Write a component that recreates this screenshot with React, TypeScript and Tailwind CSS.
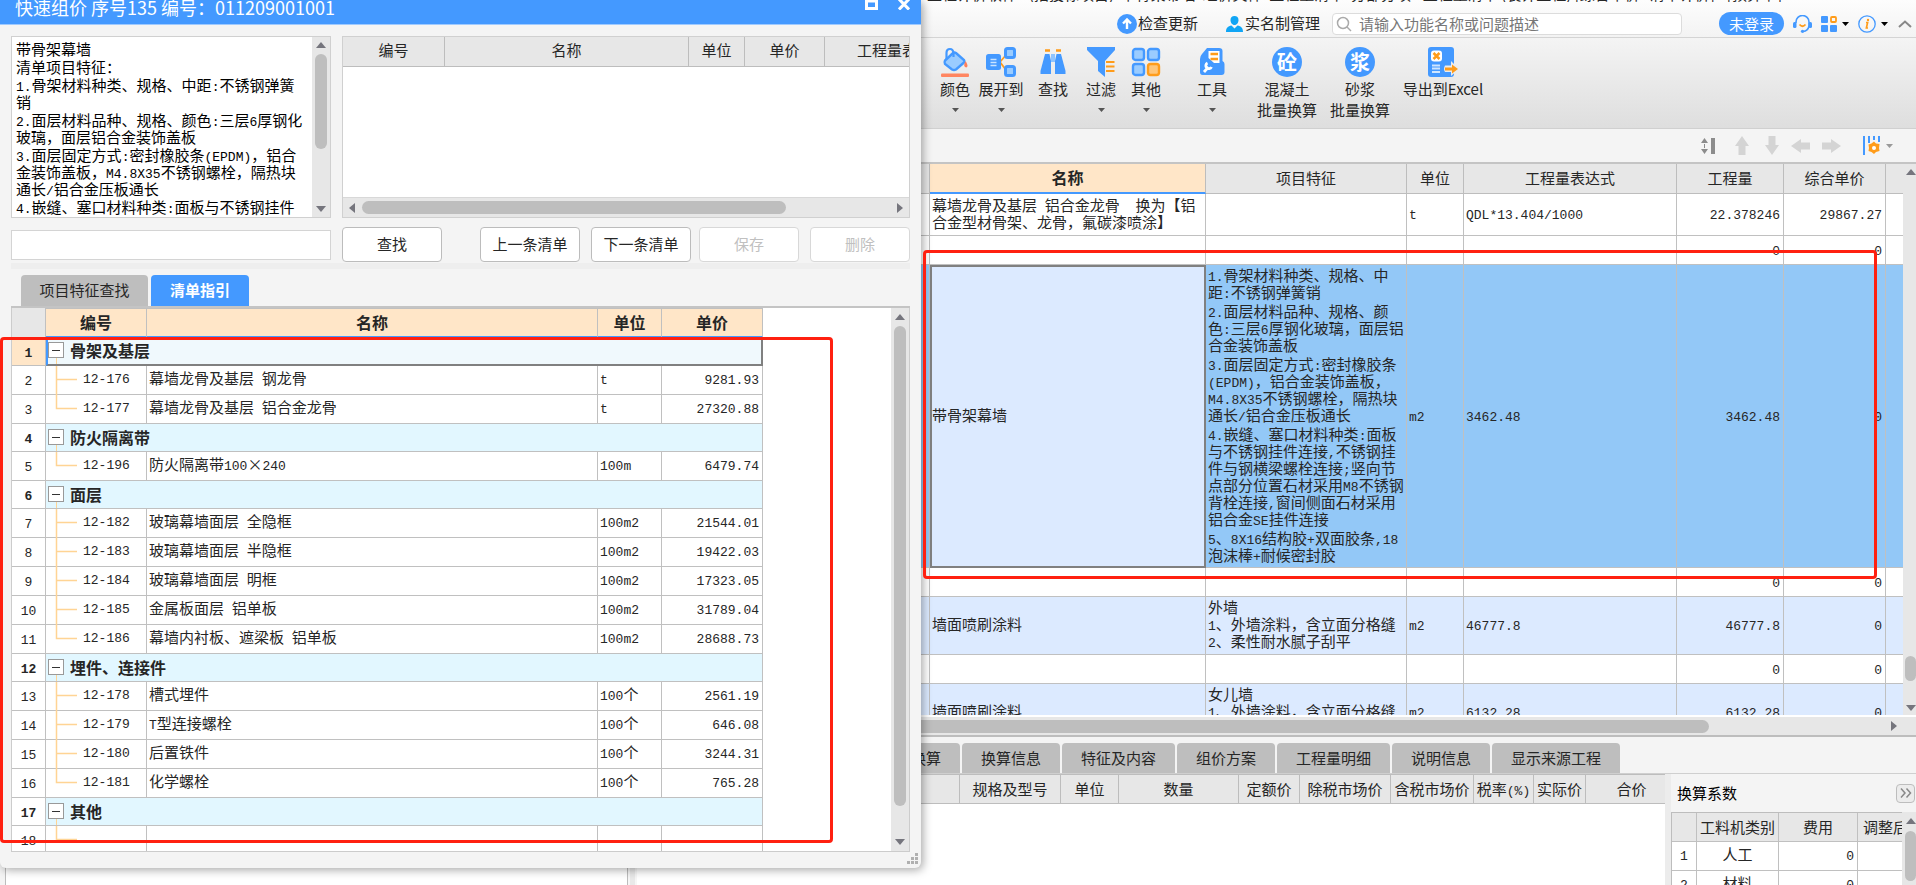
import type { ReactNode } from 'react';
import { clsx } from 'clsx';

type GuideRow = {
  no: number;
  group?: boolean;
  last?: boolean;
  code?: string;
  name?: string;
  unit?: string;
  price?: string;
};

const guideRows: GuideRow[] = [
  { no: 1, group: true, name: '骨架及基层' },
  { no: 2, code: '12-176', name: '幕墙龙骨及基层 钢龙骨', unit: 't', price: '9281.93' },
  { no: 3, code: '12-177', name: '幕墙龙骨及基层 铝合金龙骨', unit: 't', price: '27320.88', last: true },
  { no: 4, group: true, name: '防火隔离带' },
  { no: 5, code: '12-196', name: '防火隔离带100×240', unit: '100m', price: '6479.74', last: true },
  { no: 6, group: true, name: '面层' },
  { no: 7, code: '12-182', name: '玻璃幕墙面层 全隐框', unit: '100m2', price: '21544.01' },
  { no: 8, code: '12-183', name: '玻璃幕墙面层 半隐框', unit: '100m2', price: '19422.03' },
  { no: 9, code: '12-184', name: '玻璃幕墙面层 明框', unit: '100m2', price: '17323.05' },
  { no: 10, code: '12-185', name: '金属板面层 铝单板', unit: '100m2', price: '31789.04' },
  { no: 11, code: '12-186', name: '幕墙内衬板、遮梁板 铝单板', unit: '100m2', price: '28688.73', last: true },
  { no: 12, group: true, name: '埋件、连接件' },
  { no: 13, code: '12-178', name: '槽式埋件', unit: '100个', price: '2561.19' },
  { no: 14, code: '12-179', name: 'T型连接螺栓', unit: '100个', price: '646.08' },
  { no: 15, code: '12-180', name: '后置铁件', unit: '100个', price: '3244.31' },
  { no: 16, code: '12-181', name: '化学螺栓', unit: '100个', price: '765.28', last: true },
  { no: 17, group: true, name: '其他' },
  { no: 18, code: '', name: '', unit: '', price: '', last: true },
];

const descParas = [
  '带骨架幕墙',
  '清单项目特征：',
  '1.骨架材料种类、规格、中距:不锈钢弹簧\n销',
  '2.面层材料品种、规格、颜色:三层6厚钢化\n玻璃，面层铝合金装饰盖板',
  '3.面层固定方式:密封橡胶条(EPDM)，铝合\n金装饰盖板，M4.8X35不锈钢螺栓，隔热块\n通长/铝合金压板通长',
  '4.嵌缝、塞口材料种类:面板与不锈钢挂件',
];

const featureParas = [
  '1.骨架材料种类、规格、中\n距:不锈钢弹簧销',
  '2.面层材料品种、规格、颜\n色:三层6厚钢化玻璃，面层铝\n合金装饰盖板',
  '3.面层固定方式:密封橡胶条\n(EPDM)，铝合金装饰盖板，\nM4.8X35不锈钢螺栓，隔热块\n通长/铝合金压板通长',
  '4.嵌缝、塞口材料种类:面板\n与不锈钢挂件连接,不锈钢挂\n件与钢横梁螺栓连接;竖向节\n点部分位置石材采用M8不锈钢\n背栓连接,窗间侧面石材采用\n铝合金SE挂件连接',
  '5、8X16结构胶+双面胶条,18\n泡沫棒+耐候密封胶',
];

const billRows = [
  { name: '幕墙龙骨及基层 铝合金龙骨  换为【铝\n合金型材骨架、龙骨，氟碳漆喷涂】', unit: 't', expr: 'QDL*13.404/1000', qty: '22.378246', price: '29867.27', h: 'h-[42px]' },
  { qty: '0', price: '0', h: 'h-[29px]' },
  { name: '带骨架幕墙', feature: featureParas, unit: 'm2', expr: '3462.48', qty: '3462.48', price: '0', h: 'h-[303px]', selected: true },
  { qty: '0', price: '0', h: 'h-[29px]' },
  { name: '墙面喷刷涂料', feature: ['外墙', '1、外墙涂料，含立面分格缝', '2、柔性耐水腻子刮平'], unit: 'm2', expr: '46777.8', qty: '46777.8', price: '0', h: 'h-[58px]', blue: true },
  { qty: '0', price: '0', h: 'h-[29px]' },
  { name: '墙面喷刷涂料', feature: ['女儿墙', '1、外墙涂料，含立面分格缝', '2、柔性耐水腻子刮平'], unit: 'm2', expr: '6132.28', qty: '6132.28', price: '0', h: 'h-[58px]', blue: true },
];

// ASCII runs are set half-width so they line up with the full-width characters
function Mixed({ text }: { text: string }) {
  return (
    <>
      {text.split(/([\x20-\x7e]+)/).map((part, i) =>
        i % 2 ? (
          <span key={i} className="font-['Liberation_Mono',monospace] text-[13px] leading-[0px]">{part}</span>
        ) : (
          part
        ),
      )}
    </>
  );
}

function Arrow({ dir, className = 'text-[#75757d]' }: { dir: 'up' | 'down' | 'left' | 'right'; className?: string }) {
  const d = { up: 'M0 8L5 2L10 8Z', down: 'M0 2H10L5 8Z', left: 'M8 0V10L2 5Z', right: 'M2 0V10L8 5Z' }[dir];
  return (
    <svg width="10" height="10" viewBox="0 0 10 10" className={clsx('shrink-0', className)}>
      <path d={d} fill="currentColor" />
    </svg>
  );
}

function Caret({ className = 'text-[#555]' }: { className?: string }) {
  return (
    <svg width="7" height="4" viewBox="0 0 7 4" className={clsx('shrink-0', className)}>
      <path d="M0 0H7L3.5 4Z" fill="currentColor" />
    </svg>
  );
}

function TopBar() {
  return (
    <header className="flex h-[38px] shrink-0 flex-col border-b border-[#d4d4d4] bg-gradient-to-b from-[#fdfdfd] to-[#f3f3f3] pl-[922px]">
      <div className="flex h-[2px] shrink-0 items-end justify-end overflow-hidden whitespace-pre pr-[134px] text-[15px] leading-[17px]">
        工程计价软件 - (招投标项目)  带骨架幕墙  组价文件  工程量清单  分部分项 - 工程量清单 (装饰工程) [综合单价   清单计价] - [预算书]
      </div>
      <div className="flex flex-1 items-center justify-end pr-1 pt-2 whitespace-nowrap">
        <a href="#update" className="flex items-center gap-px">
          <svg width="20" height="20" viewBox="0 0 20 20">
            <circle cx="10" cy="10" r="10" fill="#4499ff" />
            <path d="M10 15V6M6 9.5L10 5.5L14 9.5" stroke="#fff" strokeWidth="2.4" fill="none" />
          </svg>
          检查更新
        </a>
        <a href="#realname" className="ml-7 flex items-center gap-[2px]">
          <svg width="17" height="16" viewBox="0 0 17 16" fill="#10a5f5">
            <path d="M4.5 4C4.500 1.500 6 0 8.500 0S12.500 1.500 12.500 4S11 9 8.500 9S4.500 6.500 4.500 4Z" />
            <path d="M0 16C0 12 2 10 5.500 9.500L8.500 12.500L11.500 9.500C15 10 17 12 17 16Z" />
          </svg>
          实名制管理
        </a>
        <label className="ml-3 flex h-[22px] w-[350px] items-center gap-[7px] rounded border border-[#dcdcdc] bg-white pl-[3px]">
          <svg width="16" height="16" viewBox="0 0 16 16" fill="none" stroke="#aaa" strokeWidth="1.5">
            <circle cx="7" cy="7" r="5.500" />
            <path d="M11 11L15 15" />
          </svg>
          <input aria-label="搜索" placeholder="请输入功能名称或问题描述" className="min-w-0 flex-1 bg-transparent leading-5 outline-none placeholder:text-[#777]" />
        </label>
        <button className="ml-[37px] h-[23px] w-[65px] rounded-full bg-[#4499ff] leading-[22px] text-white">未登录</button>
        <button aria-label="客服" className="ml-[9px]">
          <svg width="19" height="18" viewBox="0 0 19 18" fill="none">
            <path d="M3 8V7A6.500 6.500 0 0 1 16 7V11Q15 16 10 16.500" stroke="#4499ff" strokeWidth="1.600" />
            <rect x="0" y="7" width="3.500" height="6" rx="1.500" fill="#4499ff" />
            <rect x="15.500" y="7" width="3.500" height="6" rx="1.500" fill="#4499ff" />
            <path d="M6.500 9.500Q9.500 13 12.500 9.500" stroke="#ff9c1a" strokeWidth="1.800" />
            <circle cx="9.500" cy="16.300" r="1.600" fill="#4499ff" />
          </svg>
        </button>
        <button aria-label="应用" className="ml-[9px] flex items-center gap-[5px]">
          <svg width="16" height="16" viewBox="0 0 16 16">
            <g fill="#4499ff">
              <rect width="7" height="7" rx="1" />
              <rect y="9" width="7" height="7" rx="1" />
              <rect x="9" y="9" width="7" height="7" rx="1" />
            </g>
            <rect x="10" y="1" width="5" height="5" rx="1" fill="none" stroke="#ff9c1a" strokeWidth="1.800" />
          </svg>
          <Caret className="text-black" />
        </button>
        <button aria-label="关于" className="ml-[9px] flex items-center gap-[5px]">
          <svg width="18" height="18" viewBox="0 0 18 18" fill="none">
            <circle cx="9" cy="9" r="8.200" stroke="#4499ff" strokeWidth="1.300" />
            <path d="M8 7.500H9.600L8.400 13H10" stroke="#ff9c1a" strokeWidth="1.700" />
            <circle cx="10" cy="5" r="1.200" fill="#ff9c1a" />
          </svg>
          <Caret className="text-black" />
        </button>
        <button aria-label="收起" className="ml-[10px]">
          <svg width="14" height="8" viewBox="0 0 14 8" fill="none" stroke="#888" strokeWidth="2">
            <path d="M1 7L7 1.500L13 7" />
          </svg>
        </button>
      </div>
    </header>
  );
}

const icons: Record<string, ReactNode> = {
  paint: (
    <svg width="30" height="30" viewBox="0 0 30 30">
      <path d="M13 6Q14.500 5 16 6L24 13Q25 14.500 24 15.500L16 22.500Q14 23.500 12 22.500L5 17Q4 15.500 5 13.500Z" fill="#9accff" stroke="#4499ff" strokeWidth="2.400" />
      <path d="M6.500 12V6Q6.500 2 10 2Q13 2 13.500 6V10" fill="none" stroke="#4499ff" strokeWidth="2.200" />
      <path d="M25.500 14Q29 19 26.500 20.500Q22.500 20 25.500 14Z" fill="#ff7f5a" />
      <rect x="1" y="26.500" width="28" height="3.500" rx="1" fill="#ff8560" />
    </svg>
  ),
  expand: (
    <svg width="30" height="30" viewBox="0 0 30 30">
      <path d="M14 15L20 8M14 15L20 23" stroke="#ff9c1a" strokeWidth="1.800" />
      <rect x="0" y="7" width="15" height="16" rx="2.500" fill="#4499ff" />
      <path d="M4.500 12.500H10.500M4.500 15.500H10.500M4.500 18.500H10.500" stroke="#c9e4ff" strokeWidth="1.500" />
      <rect x="19.500" y="1.500" width="9" height="9" rx="2" fill="#9accff" stroke="#4499ff" strokeWidth="3" />
      <rect x="19.500" y="19.500" width="9" height="9" rx="2" fill="#9accff" stroke="#4499ff" strokeWidth="3" />
    </svg>
  ),
  find: (
    <svg width="30" height="30" viewBox="0 0 30 30">
      <path d="M7 3.500H12M18 3.500H23" stroke="#ff9c1a" strokeWidth="2.500" />
      <path d="M7 7H11.500L13 14V27H2.500V24Z" fill="#4499ff" />
      <path d="M18.500 7H23L27.500 24V27H17V14Z" fill="#4499ff" />
      <path d="M13 7H17V15H13Z" fill="#8fc4ff" />
    </svg>
  ),
  filter: (
    <svg width="30" height="30" viewBox="0 0 30 30">
      <path d="M1 0H29V3L19 14V30L12 24V14L1 3Z" fill="#4499ff" />
      <path d="M20 15H28.500M20 19.500H28.500M20 24H28.500" stroke="#ff9c1a" strokeWidth="2.200" />
    </svg>
  ),
  other: (
    <svg width="30" height="30" viewBox="0 0 30 30" fill="#9accff" stroke="#4499ff" strokeWidth="2.400">
      <rect x="2" y="2" width="11" height="11" rx="2.500" />
      <rect x="17" y="2" width="11" height="11" rx="2.500" />
      <rect x="2" y="17" width="11" height="11" rx="2.500" />
      <rect x="17" y="17" width="11" height="11" rx="2.500" fill="#ffc67a" stroke="#ff9c1a" />
    </svg>
  ),
  tool: (
    <svg width="30" height="30" viewBox="0 0 30 30">
      <path d="M10 1H22Q25.500 1 25.500 4V14Q27.500 15 27.500 17V25Q27.500 28 24.500 28H5.500Q3 28 3 25V12Q3 9 5 7Z" fill="#4499ff" />
      <path d="M11.500 4H22.500V16H17L11.500 11Z" fill="#fff" />
      <path d="M13.500 7H21M13.500 12H21" stroke="#ff9c1a" strokeWidth="2.400" />
      <path d="M7 25L11.500 20M10.500 16A3 3 0 1 0 14.500 20" stroke="#fff" strokeWidth="2.800" fill="none" />
    </svg>
  ),
  concrete: <span className="flex size-[30px] items-center justify-center rounded-full bg-[#4499ff] text-xl font-bold leading-none text-white">砼</span>,
  mortar: <span className="flex size-[30px] items-center justify-center rounded-full bg-[#4499ff] text-xl font-bold leading-none text-white">浆</span>,
  excel: (
    <svg width="32" height="30" viewBox="0 0 32 30">
      <rect x="1" y="0" width="26" height="30" rx="3" fill="#4499ff" />
      <rect x="4" y="3.500" width="11" height="11" rx="3" fill="#fff" />
      <path d="M6.500 6L12.500 12M12.500 6L6.500 12" stroke="#ff9c1a" strokeWidth="2.500" />
      <path d="M5 18.500H13M5 21.500H13M5 25H13" stroke="#cfe6ff" strokeWidth="1.800" />
      <path d="M18 18.500H24V14L32 22L24 29V25H18Q16 22 18 18.500Z" fill="#ececec" />
      <path d="M18 20.500H25V17.500L31 22L25 26.500V23.500H18Z" fill="#ff9c1a" />
    </svg>
  ),
};

const ribbonItems = [
  { icon: 'paint', label: '颜色', menu: true, w: 'w-9' },
  { icon: 'expand', label: '展开到', menu: true, w: 'w-14' },
  { icon: 'find', label: '查找', w: 'w-12' },
  { icon: 'filter', label: '过滤', menu: true, w: 'w-12' },
  { icon: 'other', label: '其他', menu: true, w: 'w-[42px]' },
  { icon: 'tool', label: '工具', menu: true, w: 'w-[90px]' },
  { icon: 'concrete', label: '混凝土', sub: '批量换算', w: 'w-[60px]' },
  { icon: 'mortar', label: '砂浆', sub: '批量换算', w: 'w-[86px]' },
  { icon: 'excel', label: '导出到Excel', w: 'w-20' },
];

function Ribbon() {
  return (
    <nav className="flex h-[91px] shrink-0 border-b border-[#d0d0d0] bg-gradient-to-b from-[#f4f4f4] to-[#dedede] pl-[937px] pt-[9px]">
      {ribbonItems.map((item) => (
        <button key={item.label} className={clsx('flex h-20 flex-col items-center whitespace-nowrap', item.w)}>
          {icons[item.icon]}
          <span className="mt-px leading-[22px]">{item.label}</span>
          {item.sub && <span className="leading-5">{item.sub}</span>}
          {item.menu && <Caret className="mt-2 text-[#555]" />}
        </button>
      ))}
    </nav>
  );
}

function GridToolbar() {
  return (
    <div className="flex h-[33px] shrink-0 items-center justify-end bg-[#f4f4f4] pr-[23px]">
      <button aria-label="行高">
        <svg width="14" height="16" viewBox="0 0 14 16" fill="#8c8c8c">
          <path d="M0 5L3.500 0L7 5ZM0 11L3.500 16L7 11ZM3 6H4V10H3Z" />
          <rect x="10" width="4" height="16" />
        </svg>
      </button>
      <button aria-label="上移" className="ml-5">
        <svg width="14" height="19" viewBox="0 0 14 19" fill="#d4d4d4"><path d="M7 0L14 10H10.500V19H3.500V10H0Z" /></svg>
      </button>
      <button aria-label="下移" className="ml-4">
        <svg width="14" height="19" viewBox="0 0 14 19" fill="#d4d4d4"><path d="M7 19L14 9H10.500V0H3.500V9H0Z" /></svg>
      </button>
      <button aria-label="左移" className="ml-3">
        <svg width="19" height="14" viewBox="0 0 19 14" fill="#d4d4d4"><path d="M0 7L10 0V3.500H19V10.500H10V14Z" /></svg>
      </button>
      <button aria-label="右移" className="ml-3">
        <svg width="19" height="14" viewBox="0 0 19 14" fill="#d4d4d4"><path d="M19 7L9 0V3.500H0V10.500H9V14Z" /></svg>
      </button>
      <button aria-label="列设置" className="ml-[22px] flex items-center gap-[6px]">
        <svg width="17" height="19" viewBox="0 0 17 19">
          <path d="M1 0V19M6 0V7M11 0V4M16 0V6" stroke="#4499ff" strokeWidth="2" />
          <path d="M11 5.500L13 7.500L16.500 8L16 12L16.500 15L13 16L11 18L8.500 16L5.500 15L6 12L5.500 8.500L8.500 7.500Z" fill="#ff9c1a" />
          <circle cx="11" cy="12" r="2" fill="#fff" />
        </svg>
        <Caret className="text-[#999]" />
      </button>
    </div>
  );
}

const mainHead = 'border-r border-b border-[#bdbdbd] bg-[#e7e7e7] pt-0 pb-[2px] font-normal';
const line = 'border-r border-b border-[#c0c0c0] pt-0';
const cell = 'border-r border-b border-[#c0c0c0] pt-0 pb-1';

function BillGrid() {
  return (
    <div className="flex min-h-0 flex-1 border-t-2 border-[#c4c4c4]">
      <div className="min-w-0 flex-1 overflow-hidden">
        <table className="w-full table-fixed border-separate border-spacing-0 whitespace-pre text-left leading-[17px]">
          <colgroup>
            <col className="w-[930px]" />
            <col className="w-[276px]" />
            <col className="w-[201px]" />
            <col className="w-[57px]" />
            <col />
            <col className="w-[107px]" />
            <col className="w-[102px]" />
            <col className="w-[17px]" />
          </colgroup>
          <thead>
            <tr className="h-[30px] text-center">
              <th className={mainHead} />
              <th className="border-r border-b-2 border-r-[#bdbdbd] border-b-[#4499ff] bg-[#ffe6c8] pt-0 pb-[2px] text-base font-bold leading-[17px]">名称</th>
              <th className={mainHead}>项目特征</th>
              <th className={mainHead}>单位</th>
              <th className={mainHead}>工程量表达式</th>
              <th className={mainHead}>工程量</th>
              <th className={mainHead}>综合单价</th>
              <th className="border-b border-[#bdbdbd] bg-[#e7e7e7]" />
            </tr>
          </thead>
          <tbody>
            {billRows.map((row, i) => (
              <tr key={i} className={clsx(row.h, row.selected ? 'bg-[#93c8f7]' : row.blue ? 'bg-[#dceaff]' : 'bg-white')}>
                <td className={cell} />
                <td className={row.selected ? 'border-2 border-[#808080] bg-[#dceaff] px-0 pt-0 pb-1' : clsx(cell, 'pl-[2px]')}>
                  <Mixed text={row.name ?? ''} />
                </td>
                <td className={clsx(cell, 'pl-[2px]')}>
                  <div className={row.selected ? 'space-y-[2px]' : ''}>
                    {row.feature?.map((p) => <p key={p}><Mixed text={p} /></p>)}
                  </div>
                </td>
                <td className={clsx(cell, 'pl-[2px]')}><Mixed text={row.unit ?? ''} /></td>
                <td className={clsx(cell, 'pl-[2px]')}><Mixed text={row.expr ?? ''} /></td>
                <td className={clsx(cell, 'pr-[3px] text-right')}><Mixed text={row.qty} /></td>
                <td className={clsx(cell, 'pr-[3px] text-right')}><Mixed text={row.price} /></td>
                <td className="border-b border-[#c0c0c0]" />
              </tr>
            ))}
          </tbody>
        </table>
      </div>
      <div className="flex w-[13px] shrink-0 flex-col items-end overflow-hidden bg-[#e7e7e7] pb-[2px] pt-[3px]">
        <Arrow dir="up" />
        <div className="flex-1" />
        <div className="mb-[22px] h-[25px] w-[11px] rounded-full bg-[#bebebe]" />
        <Arrow dir="down" />
      </div>
    </div>
  );
}

const detailTabs = ['标准换算', '换算信息', '特征及内容', '组价方案', '工程量明细', '说明信息', '显示来源工程'];

function DetailPanel() {
  return (
    <section className="flex h-[150px] shrink-0 flex-col border-t-2 border-[#bdbdbd] bg-[#f4f4f4]">
      <div className="flex h-[37px] items-end gap-[2px] border-b border-[#cfcfcf] pl-[862px]">
        {detailTabs.map((t) => (
          <button key={t} className="h-[30px] rounded-t-sm bg-[#bebebe] px-[19px] whitespace-nowrap">{t}</button>
        ))}
      </div>
      <div className="flex min-h-0 flex-1">
        <div className="w-[5px] shrink-0" />
        <div className="w-[623px] shrink-0 border-x border-[#bdbdbd] bg-white" />
        <div className="w-[9px] shrink-0 border-x-2 border-[#f6f6f6] bg-[#e9e9e9]" />
        <div className="min-w-0 flex-1 bg-white">
          <table className="w-full table-fixed border-separate border-spacing-0 whitespace-nowrap">
            <colgroup>
              <col className="w-[323px]" />
              <col className="w-[101px]" />
              <col className="w-[58px]" />
              <col className="w-[120px]" />
              <col className="w-[61px]" />
              <col className="w-[91px]" />
              <col className="w-[83px]" />
              <col className="w-[60px]" />
              <col className="w-[52px]" />
              <col />
            </colgroup>
            <thead>
              <tr className="h-[30px]">
                {['', '规格及型号', '单位', '数量', '定额价', '除税市场价', '含税市场价', '税率(%)', '实际价', '合价'].map((h) => (
                  <th key={h} className="border-b border-t border-r border-[#bdbdbd] bg-[#e7e7e7] px-0 text-[15px] font-normal leading-5 last:border-r-0 last:pl-3">
                    <Mixed text={h} />
                  </th>
                ))}
              </tr>
            </thead>
          </table>
        </div>
        <aside className="flex w-[251px] shrink-0 flex-col overflow-hidden border-l-[6px] border-[#ececec]">
          <div className="flex h-[38px] shrink-0 items-center justify-between pl-[6px] pr-px">
            <h2 className="text-black">换算系数</h2>
            <button aria-label="展开" className="flex size-[19px] items-center justify-center rounded border border-[#bdbdbd] bg-[#ececec]">
              <svg width="12" height="10" viewBox="0 0 12 10" fill="none" stroke="#888" strokeWidth="1.500"><path d="M1 0.500L5 5L1 9.500M6.500 0.500L10.500 5L6.500 9.500" /></svg>
            </button>
          </div>
          <div className="flex min-h-0 flex-1">
            <div className="min-w-0 flex-1 overflow-hidden bg-white">
              <table className="w-[290px] table-fixed border-separate border-spacing-0 whitespace-nowrap border-l border-t border-[#bdbdbd] leading-5">
                <colgroup>
                  <col className="w-[25px]" />
                  <col className="w-[82px]" />
                  <col className="w-[79px]" />
                  <col />
                </colgroup>
                <thead>
                  <tr className="h-[29px] bg-[#e7e7e7]">
                    <th className={line} />
                    <th className={clsx(line, 'font-normal')}>工料机类别</th>
                    <th className={clsx(line, 'font-normal')}>费用</th>
                    <th className={clsx(line, 'pl-[5px] text-left font-normal')}>调整后系数</th>
                  </tr>
                </thead>
                <tbody>
                  {['人工', '材料'].map((name, i) => (
                    <tr key={name} className="h-[29px]">
                      <td className={clsx(cell, 'text-center')}><Mixed text={String(i + 1)} /></td>
                      <td className={clsx(cell, 'text-center')}>{name}</td>
                      <td className={clsx(cell, 'pr-[3px] text-right')}><Mixed text="0" /></td>
                      <td className={cell} />
                    </tr>
                  ))}
                </tbody>
              </table>
            </div>
            <div className="flex w-[14px] shrink-0 flex-col items-end gap-[5px] bg-[#e7e7e7] pt-1">
              <Arrow dir="up" />
              <div className="h-[50px] w-[11px] shrink-0 rounded-full bg-[#bebebe]" />
            </div>
          </div>
        </aside>
      </div>
    </section>
  );
}

// vertical connector plus the branch that leads to the item code
function TreeLine({ last }: { last?: boolean }) {
  return (
    <svg width="32" height="29" viewBox="0 0 32 29" className="shrink-0" stroke="#ffd494" strokeWidth="1.500" fill="none">
      <path d={last ? 'M10.500 0V13.500H31' : 'M10.500 0V29M10.500 13.500H31'} />
    </svg>
  );
}

function GuideTable() {
  return (
    <table className="w-[751px] table-fixed border-separate border-spacing-0 whitespace-pre text-left leading-[18px]">
      <colgroup>
        <col className="w-[34px]" />
        <col className="w-[101px]" />
        <col className="w-[451px]" />
        <col className="w-[64px]" />
        <col className="w-[101px]" />
      </colgroup>
      <thead>
        <tr className="h-[30px] text-center text-base leading-[18px]">
          <th className="border-r border-b border-[#c0c0c0] bg-[#e7e7e7]" />
          {['编号', '名称', '单位', '单价'].map((h) => (
            <th key={h} className="border-r border-b-2 border-t border-[#c0c0c0] border-b-[#4499ff] bg-[#ffe6c8] pt-0 pb-[2px] font-bold">{h}</th>
          ))}
        </tr>
      </thead>
      <tbody>
        {guideRows.map((row) =>
          row.group ? (
            <tr key={row.no} className="h-7 font-bold">
              <td className={clsx(line, 'pb-[2px] text-center', row.no === 1 && 'bg-[#ffe6c8]')}><Mixed text={String(row.no)} /></td>
              <td
                colSpan={4}
                className={row.no === 1 ? 'border-b-2 border-l-2 border-r-2 border-[#808080] border-l-[#4499ff] bg-[#f0f9fd] p-0' : 'border-r border-b border-[#c0c0c0] bg-[#e2f7ff] p-0'}
              >
                <div className={clsx('flex items-center gap-[6px] text-base leading-[18px]', row.no === 1 ? 'h-[26px]' : 'h-[27px] pl-[2px]')}>
                  <span className="flex flex-col items-center self-end">
                    <button aria-label="折叠" className="flex size-4 items-center justify-center border border-[#999] bg-white">
                      <span className="h-px w-2 bg-[#333]" />
                    </button>
                    <span className="h-[6px] w-px bg-[#ffd494]" />
                  </span>
                  <span className="pb-[2px]">{row.name}</span>
                </div>
              </td>
            </tr>
          ) : (
            <tr key={row.no} className="h-[29px]">
              <td className={clsx(line, 'pb-[2px] text-center')}><Mixed text={String(row.no)} /></td>
              <td className="border-r border-b border-[#c0c0c0] p-0">
                <div className="flex h-7 items-center gap-[5px]">
                  <TreeLine last={row.last} />
                  <Mixed text={row.code ?? ''} />
                </div>
              </td>
              <td className={clsx(cell, 'pl-[2px]')}><Mixed text={row.name ?? ''} /></td>
              <td className={clsx(cell, 'pl-[2px]')}><Mixed text={row.unit ?? ''} /></td>
              <td className={clsx(cell, 'pr-[3px] text-right')}><Mixed text={row.price ?? ''} /></td>
            </tr>
          ),
        )}
      </tbody>
    </table>
  );
}

function DialogButton({ children, disabled, className }: { children: ReactNode; disabled?: boolean; className?: string }) {
  return (
    <button
      disabled={disabled}
      className={clsx('h-[35px] w-[100px] shrink-0 rounded border bg-white', disabled ? 'border-[#d8d8d8] text-[#c0c0c0]' : 'border-[#bcbcbc]', className)}
    >
      {children}
    </button>
  );
}

function QuickPriceDialog() {
  return (
    <div role="dialog" aria-label="快速组价" className="absolute bottom-[17px] left-0 top-0 flex w-[921px] flex-col rounded-b-md bg-[#f4f4f4] shadow-[2px_2px_10px_rgba(0,0,0,0.35)]">
      <div className="flex h-[25px] shrink-0 items-start justify-between border-b border-[#9fcaff] bg-[#4499ff] pl-[15px] pr-[11px] text-white">
        <h1 className="text-lg leading-[14px]">快速组价 序号135 编号：011209001001</h1>
        <div className="flex gap-5">
          <button aria-label="还原">
            <svg width="13" height="10" viewBox="0 0 13 10" className="block"><path d="M1.500 0V8.500H11.500V0M0 1H13" stroke="#fff" strokeWidth="3" fill="none" /></svg>
          </button>
          <button aria-label="关闭">
            <svg width="12" height="10" viewBox="0 0 12 10" className="block"><path d="M1 -1L11 9.500M11 -1L1 9.500" stroke="#fff" strokeWidth="3" /></svg>
          </button>
        </div>
      </div>

      <div className="flex min-h-0 flex-1 flex-col px-[11px] pb-4 pt-[11px]">
        <div className="flex h-[182px] shrink-0 gap-[11px]">
          <div className="flex w-[320px] shrink-0 border border-[#d0d0d0] bg-white">
            <div className="min-w-0 flex-1 space-y-px overflow-hidden whitespace-pre pl-1 pt-[3px] leading-[17px] text-black">
              {descParas.map((p) => <p key={p}><Mixed text={p} /></p>)}
            </div>
            <div className="flex w-[18px] flex-col items-center bg-[#e7e7e7] py-[3px]">
              <Arrow dir="up" />
              <div className="mt-1 h-[95px] w-3 rounded-full bg-[#bebebe]" />
              <div className="flex-1" />
              <Arrow dir="down" />
            </div>
          </div>
          <div className="flex min-w-0 flex-1 flex-col overflow-hidden border border-[#d0d0d0] bg-white">
            <table className="w-[637px] table-fixed border-separate border-spacing-0">
              <colgroup>
                <col className="w-[102px]" />
                <col className="w-[244px]" />
                <col className="w-[56px]" />
                <col className="w-[80px]" />
                <col className="w-[155px]" />
              </colgroup>
              <thead>
                <tr className="h-[30px]">
                  {['编号', '名称', '单位', '单价', '工程量表达式'].map((h) => (
                    <th key={h} className={mainHead}>{h}</th>
                  ))}
                </tr>
              </thead>
            </table>
            <div className="flex-1" />
            <div className="flex h-5 items-center border-t border-[#d8d8d8] bg-[#e7e7e7] px-1">
              <Arrow dir="left" />
              <div className="ml-[5px] h-[13px] w-[424px] rounded-full bg-[#bebebe]" />
              <div className="flex-1" />
              <Arrow dir="right" />
            </div>
          </div>
        </div>

        <div className="mt-[9px] flex h-[35px] shrink-0 items-center">
          <input aria-label="查找内容" className="h-[30px] w-[320px] border border-[#d4d4d4] bg-white px-2 outline-none" />
          <DialogButton className="ml-[11px]">查找</DialogButton>
          <div className="flex-1" />
          <DialogButton>上一条清单</DialogButton>
          <DialogButton className="ml-[11px]">下一条清单</DialogButton>
          <DialogButton disabled className="ml-2">保存</DialogButton>
          <DialogButton disabled className="ml-[11px]">删除</DialogButton>
        </div>
        <div className="mt-px h-[6px] shrink-0 bg-[#eeeeee]" />

        <div className="mt-[6px] flex h-[33px] shrink-0 gap-[3px] border-b-2 border-[#c4c4c4] pl-[10px]">
          <button className="w-[127px] rounded-t-sm bg-[#bebebe]">项目特征查找</button>
          <button className="w-[98px] rounded-t-sm bg-[#4499ff] font-bold text-white">清单指引</button>
        </div>
        <div className="flex min-h-0 flex-1 border-x border-b border-[#cccccc] bg-white">
          <div className="min-w-0 flex-1 overflow-hidden">
            <GuideTable />
          </div>
          <div className="flex w-[18px] shrink-0 flex-col items-center bg-[#e7e7e7] py-1">
            <Arrow dir="up" />
            <div className="mt-1 h-[480px] w-3 rounded-full bg-[#bebebe]" />
            <div className="flex-1" />
            <Arrow dir="down" />
          </div>
        </div>
      </div>
      <svg width="11" height="11" viewBox="0 0 11 11" fill="#b0b0b0" className="absolute bottom-1 right-[3px]">
        <path d="M8 0h3v3h-3zM4 4h3v3h-3zM8 4h3v3h-3zM0 8h3v3h-3zM4 8h3v3h-3zM8 8h3v3h-3z" />
      </svg>
    </div>
  );
}

export default function App() {
  return (
    <div className="relative flex h-screen flex-col overflow-hidden bg-white font-['Noto_Sans_CJK_SC',sans-serif] text-[15px] text-[#262626]">
      <TopBar />
      <Ribbon />
      <GridToolbar />
      <BillGrid />
      <div className="flex h-5 shrink-0 items-center border-t-2 border-white bg-[#e7e7e7] pr-[17px]">
        <div className="mr-[180px] h-[13px] flex-1 rounded-r-full bg-[#bebebe]" />
        <Arrow dir="right" />
      </div>
      <DetailPanel />
      <QuickPriceDialog />

      {/* highlight frames */}
      <div className="pointer-events-none absolute left-0 top-[337px] h-[506px] w-[833px] rounded-sm border-[3px] border-[#ff2010]" />
      <div className="pointer-events-none absolute left-[923px] right-[39px] top-[250px] h-[329px] rounded-sm border-[3px] border-[#ff2010]" />
    </div>
  );
}
